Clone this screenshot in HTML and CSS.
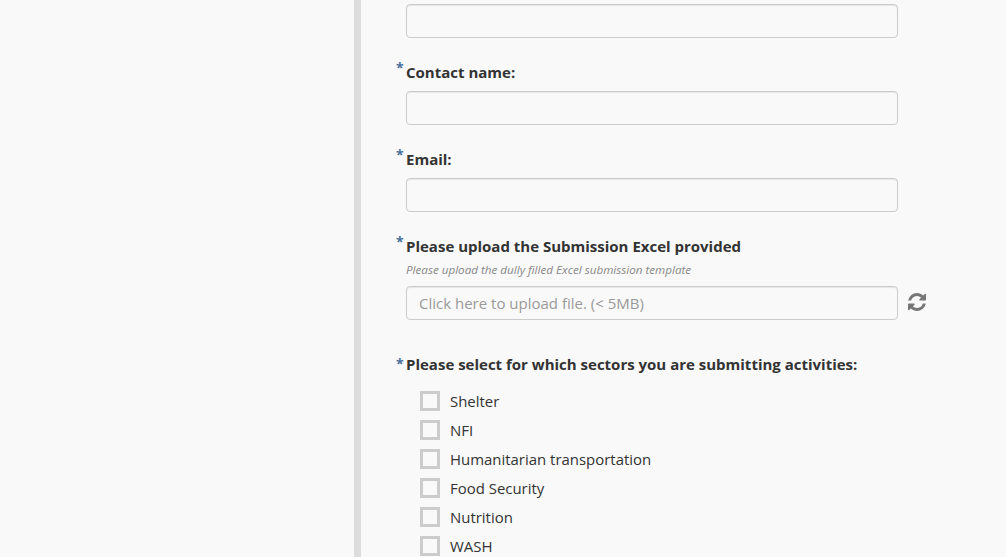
FILE: index.html
```html
<!DOCTYPE html>
<html lang="en">
<head>
<meta charset="utf-8">
<title>Submission form</title>
<link rel="stylesheet" href="styles.css">
</head>
<body>
<div class="page">
  <aside class="side"></aside>
  <main class="form">
    <input class="field" type="text" aria-label="Organisation">
    <label class="question"><span class="label"><span class="req">*</span>Contact name:</span><input class="field" type="text"></label>
    <label class="question"><span class="label"><span class="req">*</span>Email:</span><input class="field" type="text"></label>
    <div class="question upload">
      <span class="label"><span class="req">*</span>Please upload the Submission Excel provided</span>
      <span class="hint">Please upload the dully filled Excel submission template</span>
      <div class="file-row">
        <input class="field" type="text" placeholder="Click here to upload file. (&lt; 5MB)">
        <svg class="refresh" viewBox="0 0 1536 1536" aria-label="Reset"><path d="M1511 928q0 5-1 7-64 268-268 434.500T764 1536q-146 0-282.500-55T238 1324l-129 129q-19 19-45 19t-45-19-19-45V960q0-26 19-45t45-19h448q26 0 45 19t19 45-19 45l-137 137q71 66 161 102t187 36q134 0 250-65t186-179q11-17 53-117 8-23 30-23h192q13 0 22.500 9.500t9.500 22.500zm25-800v448q0 26-19 45t-45 19h-448q-26 0-45-19t-19-45 19-45l138-138Q969 256 768 256q-134 0-250 65T332 500q-11 17-53 117-8 23-30 23H50q-13 0-22.500-9.500T18 608v-7q65-268 270-434.500T768 0q146 0 284 55.500T1297 212l130-129q19-19 45-19t45 19 19 45z"/></svg>
      </div>
    </div>
    <fieldset class="sectors">
      <legend class="label"><span class="req">*</span>Please select for which sectors you are submitting activities:</legend>
      <label class="option"><input type="checkbox"><span>Shelter</span></label>
      <label class="option"><input type="checkbox"><span>NFI</span></label>
      <label class="option"><input type="checkbox"><span>Humanitarian transportation</span></label>
      <label class="option"><input type="checkbox"><span>Food Security</span></label>
      <label class="option"><input type="checkbox"><span>Nutrition</span></label>
      <label class="option"><input type="checkbox"><span>WASH</span></label>
    </fieldset>
  </main>
</div>
</body>
</html>
```
FILE: styles.css
```css
* { box-sizing: border-box; }
body { margin: 0; background: #f9f9f9; color: #333; font: 15px/21px "Open Sans", sans-serif; }
.page { display: flex; height: 557px; overflow: hidden; }
.side { flex: 0 0 361px; border-right: 7px solid #ddd; }
.form { width: 520px; flex: none; margin-left: 45px; padding-top: 4px; }
.field { display: block; width: 492px; height: 34px; margin: 0; padding: 6px 12px; border: 1px solid #ccc; border-radius: 4px; background: transparent; box-shadow: inset 0 1px 1px rgba(0, 0, 0, .075); color: #555; font: inherit; }
.field::placeholder { color: #999; opacity: 1; }
.question { display: block; padding-top: 24px; }
.label { display: block; margin-bottom: 8px; font-weight: 700; font-size: 15px; line-height: 21px; white-space: nowrap; }
.req { display: inline-block; width: 10px; margin-left: -10px; color: #4a6f9f; font-size: 14px; font-weight: 700; position: relative; top: -5px; }
.upload .label { margin-bottom: 4px; }
.hint { display: block; margin-bottom: 7px; color: #888; font-size: 11.65px; line-height: 18px; font-style: italic; }
.file-row { display: flex; align-items: center; gap: 10px; }
.refresh { width: 18px; height: 18px; margin-top: -3px; fill: #777; }
.sectors { margin: 34px 0 0; padding: 0; border: 0; }
.sectors .label { padding: 0; margin-bottom: 11px; }
.sectors .req { top: -1px; }
.option { display: flex; align-items: center; height: 29px; padding-left: 14px; }
.option input { appearance: none; width: 20px; height: 20px; margin: 0 10px 0 0; border: 3px solid #ccc; }
.option span { padding-top: 2px; font-size: 14.95px; }
```
